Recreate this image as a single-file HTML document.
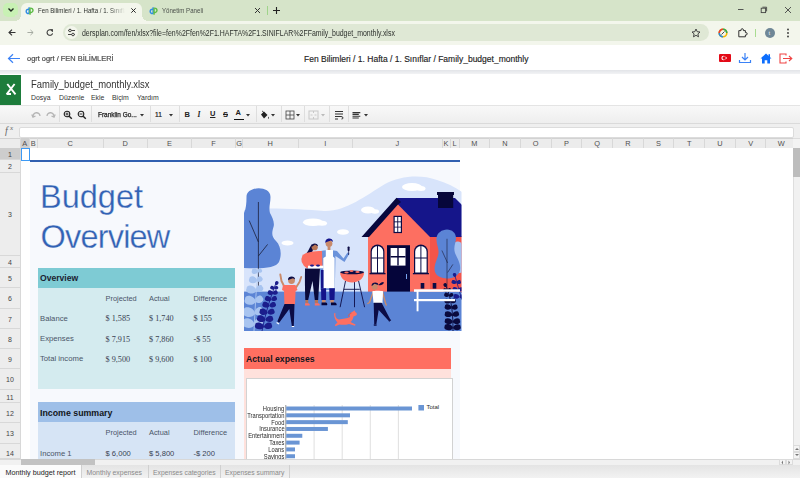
<!DOCTYPE html>
<html><head><meta charset="utf-8">
<style>
*{margin:0;padding:0;box-sizing:border-box}
html,body{width:800px;height:478px;overflow:hidden;background:#fff;font-family:"Liberation Sans",sans-serif}
.a{position:absolute}
.t{position:absolute;white-space:nowrap;line-height:1}
#tabbar{left:0;top:0;width:800px;height:21px;background:#d6e4c9}
#addr{left:0;top:21px;width:800px;height:24px;background:#f3f6ec}
#apphdr{left:0;top:45px;width:800px;height:26px;background:#fff}
#shadow{left:0;top:70px;width:800px;height:4px;background:linear-gradient(#e2e4e8,#f2f3f5)}
#xl{left:0;top:74px;width:800px;height:31px;background:#fff}
#toolbar{left:0;top:105px;width:800px;height:19px;background:linear-gradient(#f8f8f8,#eeeeee);border-top:1px solid #e4e4e4;border-bottom:1px solid #dadada}
#fbar{left:0;top:124px;width:800px;height:14px;background:#efefef}
#colhdr{left:0;top:138px;width:800px;height:10px;background:#ececec;border-top:1px solid #d2d2d2}
#grid{left:0;top:148px;width:800px;height:311px;background:#fff}
#hscroll{left:0;top:459px;width:800px;height:6px;background:#f1f1f1;border-top:1px solid #d8d8d8}
#sheets{left:0;top:465px;width:800px;height:13px;background:linear-gradient(#e4e4e4,#f2f2f2)}
.ch{position:absolute;top:0;height:10px;font-size:7.4px;line-height:12.2px;text-align:center;color:#505050;border-right:1px solid #d8d8d8}
.rh{position:absolute;left:0;width:21px;font-size:7px;text-align:center;color:#444;border-bottom:1px solid #d8d8d8;background:#ededed;border-right:1px solid #d8d8d8}
.sep{position:absolute;top:106px;width:1px;height:16px;background:#dedede}
</style></head><body>
<!-- ============ TAB BAR ============ -->
<div id="tabbar" class="a"></div>
<div class="a" style="left:3px;top:3px;width:15px;height:14px;background:#c8f1b4;border-radius:5px"></div>
<svg class="a" style="left:7px;top:7px" width="8" height="6" viewBox="0 0 8 6"><path d="M1.5 1.5 L4 4 L6.5 1.5" stroke="#1f2a1f" stroke-width="1.4" fill="none"/></svg>
<div class="a" style="left:21px;top:3px;width:121px;height:19px;background:#f3f6ec;border-radius:6px 6px 0 0"></div>
<div class="a" style="left:15px;top:15px;width:6px;height:6px;background:radial-gradient(circle at 0 0,#d6e4c9 6px,#f3f6ec 6px)"></div>
<div class="a" style="left:142px;top:15px;width:6px;height:6px;background:radial-gradient(circle at 6px 0,#d6e4c9 6px,#f3f6ec 6px)"></div>
<svg class="a" style="left:24.5px;top:5.5px" width="9" height="9.5" viewBox="0 0 10 10"><path d="M4.6 1 V8.2 M4.4 3.4 A2.4 2.4 0 1 0 4.4 8" stroke="#2f8de4" stroke-width="1.6" fill="none"/><path d="M5.6 9.5 V2 M5.8 2.2 A2.4 2.4 0 1 1 5.8 6.8" stroke="#5dbb46" stroke-width="1.6" fill="none"/></svg>
<div class="a" style="left:38px;top:6px;width:87px;height:10px;overflow:hidden;-webkit-mask-image:linear-gradient(90deg,#000 82%,transparent)"><div class="t" style="left:0;top:1px;font-size:7.2px;color:#2b2f2b;transform-origin:0 0;transform:scaleX(0.85)">Fen Bilimleri / 1. Hafta / 1. Sınıflar / Family_budget_monthly</div></div>
<svg class="a" style="left:130px;top:7px" width="7" height="7" viewBox="0 0 7 7"><path d="M1.3 1.3 L5.7 5.7 M5.7 1.3 L1.3 5.7" stroke="#222" stroke-width="0.95"/></svg>
<svg class="a" style="left:148.5px;top:5.5px" width="9" height="9.5" viewBox="0 0 10 10"><path d="M4.6 1 V8.2 M4.4 3.4 A2.4 2.4 0 1 0 4.4 8" stroke="#2f8de4" stroke-width="1.6" fill="none"/><path d="M5.6 9.5 V2 M5.8 2.2 A2.4 2.4 0 1 1 5.8 6.8" stroke="#5dbb46" stroke-width="1.6" fill="none"/></svg>
<div class="t" style="left:162px;top:7px;font-size:7.2px;color:#4a4f4a;transform-origin:0 0;transform:scaleX(0.85)">Yönetim Paneli</div>
<svg class="a" style="left:254px;top:7px" width="7" height="7" viewBox="0 0 7 7"><path d="M1 1 L6 6 M6 1 L1 6" stroke="#333" stroke-width="1"/></svg>
<div class="a" style="left:267px;top:6px;width:1px;height:9px;background:#9fd48a"></div>
<svg class="a" style="left:272px;top:6px" width="9" height="9" viewBox="0 0 9 9"><path d="M4.5 1 V8 M1 4.5 H8" stroke="#222" stroke-width="1.1"/></svg>
<svg class="a" style="left:737px;top:6px" width="9" height="9" viewBox="0 0 9 9"><path d="M1 3.5 H6.5" stroke="#444" stroke-width="0.9"/></svg>
<svg class="a" style="left:760px;top:6px" width="8" height="8" viewBox="0 0 8 8"><rect x="1.2" y="2.2" width="4.4" height="4.4" stroke="#444" stroke-width="0.9" fill="none"/><path d="M2.4 1.2 H6.6 V5.4" stroke="#444" stroke-width="0.9" fill="none"/></svg>
<svg class="a" style="left:784px;top:6px" width="8" height="8" viewBox="0 0 8 8"><path d="M1 1 L7 7 M7 1 L1 7" stroke="#444" stroke-width="0.9"/></svg>

<!-- ============ ADDRESS BAR ============ -->
<div id="addr" class="a"></div>
<svg class="a" style="left:7.5px;top:29px" width="8" height="7" viewBox="0 0 8 7"><path d="M7.5 3.5 H1.2 M4 0.6 L1 3.5 L4 6.4" stroke="#333" stroke-width="1.1" fill="none"/></svg>
<svg class="a" style="left:26.5px;top:29px" width="7" height="7" viewBox="0 0 8 7"><path d="M0.5 3.5 H6.8 M4 0.6 L7 3.5 L4 6.4" stroke="#9aa097" stroke-width="1" fill="none"/></svg>
<svg class="a" style="left:45.5px;top:29px" width="7.5" height="7.5" viewBox="0 0 8 8"><path d="M6.9 2.6 A3 3 0 1 0 7 4.6" stroke="#333" stroke-width="1.1" fill="none"/><path d="M5 0.8 H7.2 V3" stroke="#333" stroke-width="1.1" fill="none"/></svg>
<div class="a" style="left:63px;top:24px;width:646px;height:17px;background:#dfe8d5;border-radius:9px"></div>
<div class="a" style="left:65px;top:26px;width:13px;height:13px;background:#f3f6ec;border-radius:50%"></div>
<svg class="a" style="left:67px;top:28px" width="9" height="9" viewBox="0 0 9 9"><path d="M1 2.5 H8 M1 6.5 H8" stroke="#333" stroke-width="0.9"/><circle cx="3" cy="2.5" r="1.3" fill="#f3f6ec" stroke="#333" stroke-width="0.9"/><circle cx="6" cy="6.5" r="1.3" fill="#f3f6ec" stroke="#333" stroke-width="0.9"/></svg>
<div class="t" style="left:82px;top:28.5px;font-size:8.4px;color:#2d312d;transform-origin:0 0;transform:scaleX(0.83)">dersplan.com/fen/xlsx?file=fen%2Ffen%2F1.HAFTA%2F1.SINIFLAR%2FFamily_budget_monthly.xlsx</div>
<svg class="a" style="left:691px;top:28px" width="10" height="10" viewBox="0 0 10 10"><path d="M5 1 L6.2 3.7 L9 4 L6.9 5.9 L7.5 8.8 L5 7.3 L2.5 8.8 L3.1 5.9 L1 4 L3.8 3.7 Z" stroke="#333" stroke-width="0.9" fill="none" stroke-linejoin="round"/></svg>
<svg class="a" style="left:718px;top:28px" width="10" height="10" viewBox="0 0 10 10"><circle cx="5" cy="5" r="3.8" fill="none" stroke="#f2b600" stroke-width="1.6"/><path d="M5 1.2 A3.8 3.8 0 0 0 1.2 5" stroke="#e34133" stroke-width="1.6" fill="none"/><path d="M1.2 5 A3.8 3.8 0 0 0 5 8.8" stroke="#2a8bd9" stroke-width="1.6" fill="none"/><path d="M5 1.2 A3.8 3.8 0 0 1 8.8 5" stroke="#35a852" stroke-width="1.6" fill="none"/><path d="M3.5 6.5 L6.5 3.5" stroke="#333" stroke-width="0.9"/></svg>
<svg class="a" style="left:737px;top:27px" width="11" height="11" viewBox="0 0 11 11"><path d="M1.8 3.6 H4 V2.9 A1.2 1.2 0 0 1 6.4 2.9 V3.6 H8.4 V5.6 H9 A1.2 1.2 0 0 1 9 8 H8.4 V9.8 H1.8 Z" stroke="#333" stroke-width="1" fill="none" stroke-linejoin="round"/></svg>
<div class="a" style="left:755px;top:29px;width:1px;height:8px;background:#a8dc90"></div>
<div class="a" style="left:765px;top:28px;width:10px;height:10px;background:#6f8797;border-radius:50%"></div>
<div class="t" style="left:768.5px;top:30px;font-size:6px;color:#e8eef2">t</div>
<svg class="a" style="left:786px;top:28px" width="4" height="10" viewBox="0 0 4 10"><circle cx="2" cy="1.5" r="0.9" fill="#333"/><circle cx="2" cy="5" r="0.9" fill="#333"/><circle cx="2" cy="8.5" r="0.9" fill="#333"/></svg>

<!-- ============ APP HEADER ============ -->
<div id="apphdr" class="a"></div>
<div id="shadow" class="a"></div>
<svg class="a" style="left:7px;top:53px" width="14" height="11" viewBox="0 0 14 11"><path d="M13 5.5 H1.8 M6 1.2 L1.5 5.5 L6 9.8" stroke="#3b82f6" stroke-width="1.2" fill="none"/></svg>
<div class="t" style="left:27px;top:55px;font-size:7.9px;color:#4a4a4a;-webkit-text-stroke:0.2px #4a4a4a;transform-origin:0 0;transform:scaleX(0.94)">ogrt ogrt / FEN BİLİMLERİ</div>
<div class="t" style="left:304px;top:55px;font-size:8.5px;color:#222;font-weight:normal;-webkit-text-stroke:0.15px #222">Fen Bilimleri / 1. Hafta / 1. Sınıflar / Family_budget_monthly</div>
<div class="a" style="left:719px;top:54px;width:12px;height:8px;background:#e30a17;border-radius:1px"></div>
<svg class="a" style="left:719px;top:54px" width="12" height="8" viewBox="0 0 12 8"><circle cx="4.6" cy="4" r="2.2" fill="#fff"/><circle cx="5.2" cy="4" r="1.75" fill="#e30a17"/><circle cx="7.2" cy="4" r="0.8" fill="#fff"/></svg>
<svg class="a" style="left:738px;top:52px" width="14" height="12" viewBox="0 0 14 12"><path d="M7 1 V8 M4 5 L7 8 L10 5" stroke="#3b82f6" stroke-width="1.2" fill="none"/><path d="M1.5 8 V10.5 H12.5 V8" stroke="#3b82f6" stroke-width="1.2" fill="none"/></svg>
<svg class="a" style="left:760px;top:53px" width="12" height="11" viewBox="0 0 12 11"><path d="M6 0.5 L11.5 5.5 H10 V10.5 H7.3 V7.3 H4.7 V10.5 H2 V5.5 H0.5 Z" fill="#0d6efd"/><rect x="8.5" y="1.2" width="1.5" height="3" fill="#0d6efd"/></svg>
<svg class="a" style="left:779px;top:53px" width="14" height="11" viewBox="0 0 14 11"><path d="M7 2.5 V1 H1 V10 H7 V8.5" stroke="#ef4444" stroke-width="1.1" fill="none"/><path d="M4 5.5 H12.5 M10 3 L12.8 5.5 L10 8" stroke="#ef4444" stroke-width="1.1" fill="none"/></svg>

<!-- ============ EXCEL HEADER ============ -->
<div id="xl" class="a"></div>
<div class="a" style="left:0;top:75px;width:20.7px;height:30px;background:#1d7c3b"></div>
<svg class="a" style="left:5px;top:83px" width="12" height="12" viewBox="0 0 12 12"><path d="M2.3 1 L10.5 11.4 M9.6 1 L1.6 11.4 M1.6 11 H6" stroke="#fff" stroke-width="1.9" fill="none"/></svg>
<div class="t" style="left:31px;top:79px;font-size:10.5px;color:#333;transform-origin:0 0;transform:scaleX(0.9)">Family_budget_monthly.xlsx</div>
<div class="t" style="left:31px;top:94.8px;font-size:6.9px;color:#333">Dosya</div>
<div class="t" style="left:59px;top:94.8px;font-size:6.9px;color:#333">Düzenle</div>
<div class="t" style="left:91px;top:94.8px;font-size:6.9px;color:#333">Ekle</div>
<div class="t" style="left:112px;top:94.8px;font-size:6.9px;color:#333">Biçim</div>
<div class="t" style="left:137px;top:94.8px;font-size:6.9px;color:#333">Yardım</div>

<!-- ============ TOOLBAR ============ -->
<div id="toolbar" class="a"></div>
<svg class="a" style="left:31px;top:111px" width="11" height="8" viewBox="0 0 11 8"><path d="M2 5.5 A3.5 3.5 0 0 1 9 5" stroke="#b5b5b5" stroke-width="1.3" fill="none"/><path d="M0.8 3.5 L2 6.2 L4.5 5" stroke="#b5b5b5" stroke-width="1.3" fill="none"/></svg>
<svg class="a" style="left:45px;top:111px" width="11" height="8" viewBox="0 0 11 8"><path d="M9 5.5 A3.5 3.5 0 0 0 2 5" stroke="#b5b5b5" stroke-width="1.3" fill="none"/><path d="M10.2 3.5 L9 6.2 L6.5 5" stroke="#b5b5b5" stroke-width="1.3" fill="none"/></svg>
<div class="sep" style="left:59px"></div>
<svg class="a" style="left:63px;top:110px" width="10" height="10" viewBox="0 0 10 10"><circle cx="4" cy="4" r="2.8" stroke="#222" stroke-width="1.1" fill="none"/><path d="M6.2 6.2 L8.8 8.8" stroke="#222" stroke-width="1.4"/><path d="M2.5 4 H5.5 M4 2.5 V5.5" stroke="#222" stroke-width="0.9"/></svg>
<svg class="a" style="left:77px;top:110px" width="10" height="10" viewBox="0 0 10 10"><circle cx="4" cy="4" r="2.8" stroke="#222" stroke-width="1.1" fill="none"/><path d="M6.2 6.2 L8.8 8.8" stroke="#222" stroke-width="1.4"/><path d="M2.5 4 H5.5" stroke="#222" stroke-width="0.9"/></svg>
<div class="sep" style="left:91px"></div>
<div class="t" style="left:98px;top:112px;font-size:6.8px;color:#222;-webkit-text-stroke:0.25px #222;transform-origin:0 0;transform:scaleX(0.95)">Franklin Go...</div>
<svg class="a" style="left:140px;top:114px" width="4" height="3" viewBox="0 0 4 3"><path d="M0 0 H4 L2 2.5Z" fill="#333"/></svg>
<div class="sep" style="left:150px"></div>
<div class="t" style="left:155px;top:112px;font-size:6.6px;color:#222;font-weight:normal;-webkit-text-stroke:0.2px #222">11</div>
<svg class="a" style="left:169px;top:114px" width="4" height="3" viewBox="0 0 4 3"><path d="M0 0 H4 L2 2.5Z" fill="#333"/></svg>
<div class="sep" style="left:179px"></div>
<div class="t" style="left:184.5px;top:110.5px;font-size:7.5px;color:#222;font-weight:bold">B</div>
<div class="t" style="left:197.5px;top:110.5px;font-size:7.5px;color:#222;font-weight:bold;font-style:italic;font-family:'Liberation Serif',serif">I</div>
<div class="t" style="left:210px;top:110px;font-size:7.5px;color:#222;font-weight:bold;text-decoration:underline">U</div>
<div class="t" style="left:223px;top:110.5px;font-size:7.5px;color:#222;font-weight:bold;text-decoration:line-through">S</div>
<div class="t" style="left:235.5px;top:109px;font-size:7.5px;color:#222;font-weight:bold">A</div>
<div class="a" style="left:234px;top:118.5px;width:10px;height:1.6px;background:#111"></div>
<svg class="a" style="left:246px;top:114px" width="4" height="3" viewBox="0 0 4 3"><path d="M0 0 H4 L2 2.5Z" fill="#333"/></svg>
<div class="sep" style="left:256px"></div>
<svg class="a" style="left:259px;top:110px" width="11" height="10" viewBox="0 0 11 10"><path d="M2 4.5 L5 1.5 L8.5 5 L5 8.5 Z" fill="#222"/><path d="M3.2 1 L5 2.8" stroke="#222" stroke-width="1"/><path d="M9.5 6.5 Q10.5 8 9.5 9 Q8.5 8 9.5 6.5Z" fill="#222"/></svg>
<svg class="a" style="left:271px;top:114px" width="4" height="3" viewBox="0 0 4 3"><path d="M0 0 H4 L2 2.5Z" fill="#333"/></svg>
<div class="sep" style="left:281px"></div>
<svg class="a" style="left:285px;top:110px" width="10" height="10" viewBox="0 0 10 10"><rect x="1" y="1" width="8" height="8" stroke="#444" stroke-width="0.8" fill="none"/><path d="M5 1 V9 M1 5 H9" stroke="#444" stroke-width="0.8"/></svg>
<svg class="a" style="left:296px;top:114px" width="4" height="3" viewBox="0 0 4 3"><path d="M0 0 H4 L2 2.5Z" fill="#333"/></svg>
<div class="sep" style="left:304px"></div>
<svg class="a" style="left:308px;top:110px" width="11" height="10" viewBox="0 0 11 10"><rect x="1" y="1" width="9" height="8" stroke="#c8c8c8" stroke-width="1" fill="none"/><path d="M5.5 1 V3 M5.5 7 V9 M2.5 5 H4.5 M6.5 5 H8.5" stroke="#c8c8c8" stroke-width="1"/></svg>
<svg class="a" style="left:321px;top:114px" width="4" height="3" viewBox="0 0 4 3"><path d="M0 0 H4 L2 2.5Z" fill="#bbb"/></svg>
<div class="sep" style="left:329px"></div>
<svg class="a" style="left:334px;top:110px" width="10" height="10" viewBox="0 0 10 10"><path d="M1 1.5 H9 M1 4 H9 M1 6.5 H7 M1 9 H4" stroke="#333" stroke-width="1"/><path d="M7 6.5 Q9 6.5 9 8 Q9 9 7.5 9" stroke="#333" stroke-width="1" fill="none"/></svg>
<div class="sep" style="left:348px"></div>
<svg class="a" style="left:352px;top:110px" width="9" height="10" viewBox="0 0 9 10"><path d="M0.5 2.6 H8.3 M0.5 4.4 H6.8 M0.5 6.2 H8.3 M0.5 8 H6.8" stroke="#333" stroke-width="1.1"/></svg>
<svg class="a" style="left:364px;top:114px" width="4" height="3" viewBox="0 0 4 3"><path d="M0 0 H4 L2 2.5Z" fill="#333"/></svg>

<!-- ============ FORMULA BAR ============ -->
<div id="fbar" class="a"></div>
<div class="t" style="left:5px;top:126px;font-size:10px;color:#666;font-style:italic;font-family:'Liberation Serif',serif">f</div>
<div class="t" style="left:10px;top:125px;font-size:7px;color:#666;font-style:italic;font-family:'Liberation Serif',serif">x</div>
<div class="a" style="left:19px;top:126.5px;width:775px;height:11px;background:#fff;border:1px solid #dcdcdc;border-radius:2px"></div>
<!-- ============ COLUMN HEADER ============ -->
<div id="colhdr" class="a"></div>
<div class="ch" style="left:21px;width:8.5px;top:138px;background:#cfcfcf;">A</div>
<div class="ch" style="left:29.5px;width:8.5px;top:138px;">B</div>
<div class="ch" style="left:38px;width:65.5px;top:138px;">C</div>
<div class="ch" style="left:103.5px;width:44.5px;top:138px;">D</div>
<div class="ch" style="left:148px;width:44px;top:138px;">E</div>
<div class="ch" style="left:192px;width:44px;top:138px;">F</div>
<div class="ch" style="left:236px;width:7px;top:138px;">G</div>
<div class="ch" style="left:243px;width:55.5px;top:138px;">H</div>
<div class="ch" style="left:298.5px;width:54.5px;top:138px;">I</div>
<div class="ch" style="left:353px;width:89.5px;top:138px;">J</div>
<div class="ch" style="left:442.5px;width:8.0px;top:138px;">K</div>
<div class="ch" style="left:450.5px;width:9.0px;top:138px;">L</div>
<div class="ch" style="left:459.5px;width:30.69999999999999px;top:138px;">M</div>
<div class="ch" style="left:490.2px;width:30.69999999999999px;top:138px;">N</div>
<div class="ch" style="left:520.9px;width:30.700000000000045px;top:138px;">O</div>
<div class="ch" style="left:551.6px;width:30.700000000000045px;top:138px;">P</div>
<div class="ch" style="left:582.3000000000001px;width:30.700000000000045px;top:138px;">Q</div>
<div class="ch" style="left:613.0000000000001px;width:30.700000000000045px;top:138px;">R</div>
<div class="ch" style="left:643.7000000000002px;width:30.700000000000045px;top:138px;">S</div>
<div class="ch" style="left:674.4000000000002px;width:30.700000000000045px;top:138px;">T</div>
<div class="ch" style="left:705.1000000000003px;width:30.700000000000045px;top:138px;">U</div>
<div class="ch" style="left:735.8000000000003px;width:30.700000000000045px;top:138px;">V</div>
<div class="ch" style="left:766.5000000000003px;width:30.700000000000045px;top:138px;">W</div>
<div class="a" style="left:0;top:138px;width:21px;height:10px;border-right:1px solid #d8d8d8"></div>
<div class="a" style="left:793px;top:138px;width:7px;height:10px;background:#f3f3f3;border-top:1px solid #dcdcdc"></div>
<!-- ============ GRID ============ -->
<div id="grid" class="a"></div>
<div class="rh" style="top:148px;height:12px;line-height:14.1px;background:#cdcdcd;">1</div>
<div class="rh" style="top:160px;height:13px;line-height:14.1px;">2</div>
<div class="rh" style="top:173px;height:83px;line-height:84.6px;">3</div>
<div class="rh" style="top:256px;height:12px;line-height:13.6px;">4</div>
<div class="rh" style="top:268px;height:20.25px;line-height:21.85px;">5</div>
<div class="rh" style="top:288.25px;height:20.25px;line-height:21.85px;">6</div>
<div class="rh" style="top:308.5px;height:20.25px;line-height:21.85px;">7</div>
<div class="rh" style="top:328.75px;height:20.25px;line-height:21.85px;">8</div>
<div class="rh" style="top:349px;height:20.25px;line-height:21.85px;">9</div>
<div class="rh" style="top:369.25px;height:20.25px;line-height:21.85px;">10</div>
<div class="rh" style="top:389.5px;height:13.5px;line-height:15.1px;">11</div>
<div class="rh" style="top:403px;height:20.25px;line-height:21.85px;">12</div>
<div class="rh" style="top:423.25px;height:20.25px;line-height:21.85px;">13</div>
<div class="rh" style="top:443.5px;height:15.5px;line-height:19.5px;">14</div>
<!-- ============ SHEET CONTENT ============ -->
<div class="a" style="left:29.5px;top:162px;width:430px;height:297px;background:#f7f9fd"></div>
<div class="a" style="left:29.5px;top:160px;width:430px;height:2px;background:#305fb0"></div>
<div class="a" style="left:21px;top:148px;width:9px;height:12.5px;border:1.5px solid #3d9af5;background:#fff"></div>
<div class="t" style="left:40px;top:181px;font-size:32.5px;color:#3262b4;letter-spacing:0px;-webkit-text-stroke:0.3px #f7f9fd">Budget</div>
<div class="t" style="left:40.5px;top:220.5px;font-size:32.5px;color:#3262b4;letter-spacing:-0.8px;-webkit-text-stroke:0.3px #f7f9fd">Overview</div>
<!-- overview -->
<div class="a" style="left:38px;top:268px;width:197px;height:20px;background:#7ecbd4"></div>
<div class="a" style="left:38px;top:288px;width:197px;height:101px;background:#d4ebef"></div>
<div class="t" style="left:40px;top:274px;font-size:8.6px;font-weight:bold;color:#1b2230">Overview</div>
<div class="t" style="left:105.5px;top:295px;font-size:7.4px;color:#4a5568">Projected</div>
<div class="t" style="left:149px;top:295px;font-size:7.4px;color:#4a5568">Actual</div>
<div class="t" style="left:193.5px;top:295px;font-size:7.4px;color:#4a5568">Difference</div>
<div class="t" style="left:40px;top:314.5px;font-size:7.7px;color:#4a5568">Balance</div>
<div class="t" style="left:40px;top:335px;font-size:7.7px;color:#4a5568">Expenses</div>
<div class="t" style="left:40px;top:355px;font-size:7.7px;color:#4a5568">Total income</div>
<div class="t" style="left:105.5px;top:315px;font-size:8.2px;color:#3a4252;font-family:'Liberation Serif',serif">$ 1,585</div>
<div class="t" style="left:149px;top:315px;font-size:8.2px;color:#3a4252;font-family:'Liberation Serif',serif">$ 1,740</div>
<div class="t" style="left:193.5px;top:315px;font-size:8.2px;color:#3a4252;font-family:'Liberation Serif',serif">$ 155</div>
<div class="t" style="left:105.5px;top:335.5px;font-size:8.2px;color:#3a4252;font-family:'Liberation Serif',serif">$ 7,915</div>
<div class="t" style="left:149px;top:335.5px;font-size:8.2px;color:#3a4252;font-family:'Liberation Serif',serif">$ 7,860</div>
<div class="t" style="left:193.5px;top:335.5px;font-size:8.2px;color:#3a4252;font-family:'Liberation Serif',serif">-$ 55</div>
<div class="t" style="left:105.5px;top:355.5px;font-size:8.2px;color:#3a4252;font-family:'Liberation Serif',serif">$ 9,500</div>
<div class="t" style="left:149px;top:355.5px;font-size:8.2px;color:#3a4252;font-family:'Liberation Serif',serif">$ 9,600</div>
<div class="t" style="left:193.5px;top:355.5px;font-size:8.2px;color:#3a4252;font-family:'Liberation Serif',serif">$ 100</div>
<!-- income summary -->
<div class="a" style="left:38px;top:402px;width:197px;height:20px;background:#9ebfe8"></div>
<div class="a" style="left:38px;top:422px;width:197px;height:37px;background:#d6e4f5"></div>
<div class="t" style="left:40px;top:409px;font-size:8.8px;font-weight:bold;color:#121620">Income summary</div>
<div class="t" style="left:105.5px;top:428.5px;font-size:7.4px;color:#4a5568">Projected</div>
<div class="t" style="left:149px;top:428.5px;font-size:7.4px;color:#4a5568">Actual</div>
<div class="t" style="left:193.5px;top:428.5px;font-size:7.4px;color:#4a5568">Difference</div>
<div class="t" style="left:40px;top:449.5px;font-size:7.7px;color:#4a5568">Income 1</div>
<div class="t" style="left:105.5px;top:450px;font-size:7.6px;color:#3a4252">$ 6,000</div>
<div class="t" style="left:149px;top:450px;font-size:7.6px;color:#3a4252">$ 5,800</div>
<div class="t" style="left:193.5px;top:450px;font-size:7.6px;color:#3a4252">-$ 200</div>
<!-- actual expenses -->
<div class="a" style="left:243.5px;top:348px;width:207px;height:21px;background:#ff6f61"></div>
<div class="a" style="left:243.5px;top:369px;width:207px;height:90px;background:#ffe1dc"></div>
<div class="t" style="left:246px;top:355px;font-size:8.7px;font-weight:bold;color:#121620">Actual expenses</div>
<div class="a" style="left:246px;top:378px;width:206.5px;height:90px;background:#fff;border:1px solid #d2d2d2"></div>
<div class="a" style="left:246px;top:378px;width:206.5px;height:81px;overflow:hidden">
<svg class="a" style="left:0;top:0" width="207" height="81" viewBox="246 378 207 81">
<path d="M314.1 405 V459" stroke="#d8d8d8" stroke-width="0.8"/>
<path d="M342.2 405 V459" stroke="#d8d8d8" stroke-width="0.8"/>
<path d="M370.3 405 V459" stroke="#d8d8d8" stroke-width="0.8"/>
<path d="M398.4 405 V459" stroke="#d8d8d8" stroke-width="0.8"/>
<path d="M285.8 405 V459" stroke="#8a8a8a" stroke-width="0.9"/>
<rect x="286.2" y="406.50" width="125.8" height="4" fill="#6a95d4"/>
<rect x="286.2" y="413.32" width="63.8" height="4" fill="#6a95d4"/>
<rect x="286.2" y="420.14" width="61.6" height="4" fill="#6a95d4"/>
<rect x="286.2" y="426.96" width="41.7" height="4" fill="#6a95d4"/>
<rect x="286.2" y="433.78" width="16.1" height="4" fill="#6a95d4"/>
<rect x="286.2" y="440.60" width="13.4" height="4" fill="#6a95d4"/>
<rect x="286.2" y="447.42" width="8.8" height="4" fill="#6a95d4"/>
<rect x="286.2" y="454.24" width="8.8" height="4" fill="#6a95d4"/>
<rect x="418.4" y="405" width="5.6" height="5.5" fill="#6a95d4"/>
</svg>
<div class="t" style="right:168.0px;top:27.90px;font-size:6.3px;color:#2a2a2a;transform-origin:100% 0;transform:scaleX(0.92)">Housing</div>
<div class="t" style="right:168.0px;top:34.72px;font-size:6.3px;color:#2a2a2a;transform-origin:100% 0;transform:scaleX(0.92)">Transportation</div>
<div class="t" style="right:168.0px;top:41.54px;font-size:6.3px;color:#2a2a2a;transform-origin:100% 0;transform:scaleX(0.92)">Food</div>
<div class="t" style="right:168.0px;top:48.36px;font-size:6.3px;color:#2a2a2a;transform-origin:100% 0;transform:scaleX(0.92)">Insurance</div>
<div class="t" style="right:168.0px;top:55.18px;font-size:6.3px;color:#2a2a2a;transform-origin:100% 0;transform:scaleX(0.92)">Entertainment</div>
<div class="t" style="right:168.0px;top:62.00px;font-size:6.3px;color:#2a2a2a;transform-origin:100% 0;transform:scaleX(0.92)">Taxes</div>
<div class="t" style="right:168.0px;top:68.82px;font-size:6.3px;color:#2a2a2a;transform-origin:100% 0;transform:scaleX(0.92)">Loans</div>
<div class="t" style="right:168.0px;top:75.64px;font-size:6.3px;color:#2a2a2a;transform-origin:100% 0;transform:scaleX(0.92)">Savings</div>
<div class="t" style="left:180.5px;top:26.3px;font-size:6px;color:#2a2a2a">Total</div>
</div>
<svg class="a" style="left:240px;top:170px" width="225" height="165" viewBox="240 170 225 165">
<defs><clipPath id="ic"><rect x="244" y="170" width="217.5" height="161"/></clipPath></defs>
<g clip-path="url(#ic)">
<!-- sky -->
<path d="M244 210 C 262 207, 300 209, 324 211 C 345 212, 365 196, 385 184 C 400 176, 420 174, 437 180 C 447 183, 455 187, 462 192 V293 H244Z" fill="#d8e4fb"/>
<!-- clouds -->
<g fill="#fff">
<ellipse cx="412" cy="187" rx="10" ry="4"/><ellipse cx="421" cy="188.5" rx="4.5" ry="2.5"/>
<ellipse cx="368" cy="210" rx="7" ry="3.5"/><ellipse cx="375" cy="211.5" rx="4" ry="2.2"/>
<ellipse cx="313" cy="222.3" rx="10" ry="3.8"/><ellipse cx="322" cy="223.3" rx="5" ry="2.5"/>
<ellipse cx="343" cy="232" rx="6" ry="2.8"/>
<ellipse cx="287.5" cy="243" rx="6" ry="2.4"/>
</g>
<!-- left tree blob -->
<path d="M246.5 197 C 246 186, 270.5 185, 270.5 197 C 270.5 203, 268.5 208, 270 213 C 272 217, 275 222, 273.5 227 C 272 232, 271 236, 276 241 C 281 246, 282 255, 279 262 C 276 268, 262 269, 244 268 V213 C 246 209, 246.5 203, 246.5 197Z" fill="#5b84d5"/>
<path d="M258.4 202 V293 M249.2 220.6 L258.4 242 M258.4 256 L267.6 244.4" stroke="#1c1f3a" stroke-width="0.8" fill="none"/>
<!-- house side wall + roof -->
<rect x="430" y="236" width="32" height="57" fill="#f4554a"/>
<path d="M397 198 H455 L462 205 V237 H380 Z" fill="#15158a"/>
<rect x="438" y="192" width="15.2" height="16" fill="#06063a"/>
<path d="M437 192 H454 V195 H437Z" fill="#06063a"/>
<!-- gable front -->
<path d="M397 203.5 L430 237 V293 H368 V237Z" fill="#fd6f61"/>
<path d="M396.5 197.8 L361.5 237 H369 L397.5 205 L401 202 Z" fill="#07073d"/>
<!-- gable window -->
<rect x="393.5" y="215.8" width="8.5" height="17.3" fill="#0b0b45"/>
<rect x="394.7" y="217" width="2.6" height="4.4" fill="#fff"/><rect x="398.2" y="217" width="2.6" height="4.4" fill="#fff"/>
<rect x="394.7" y="222.3" width="2.6" height="4.4" fill="#fff"/><rect x="398.2" y="222.3" width="2.6" height="4.4" fill="#fff"/>
<rect x="394.7" y="227.5" width="2.6" height="4.4" fill="#fff"/><rect x="398.2" y="227.5" width="2.6" height="4.4" fill="#fff"/>
<!-- arched windows -->
<g id="aw">
<path d="M370.6 273.6 V251.5 A6.9 6.9 0 0 1 384.4 251.5 V273.6Z" fill="#0b0b45"/>
<path d="M371.8 272.4 V251.8 A5.7 5.7 0 0 1 383.2 251.8 V272.4Z" fill="#fff"/>
<path d="M377.5 245 V273 M371.5 258 H383.5" stroke="#0b0b45" stroke-width="1"/>
<rect x="369.5" y="273" width="16" height="1.3" fill="#0b0b45"/>
</g>
<use href="#aw" x="43.4"/>
<!-- door -->
<rect x="387" y="245.2" width="23" height="48" fill="#05053a"/>
<rect x="390.6" y="248" width="14.9" height="17.6" fill="#fff"/>
<path d="M398 248 V265.6 M390.6 256.8 H405.5" stroke="#05053a" stroke-width="1.4"/>
<path d="M406.5 274 V279" stroke="#7aa6ef" stroke-width="1"/>
<!-- right trees -->
<path d="M453 250 C 452 244, 455 241.5, 458 241.5 C 462 241.5, 463 246, 463 252 V 272 C 460 274, 455 273, 454 268 C 453 262, 454 256, 453 250Z" fill="#a3bff0"/>
<path d="M447 229.5 C 452 229.5, 456 233, 456 238 C 456 243, 453 247, 455 253 C 457 258, 461 263, 460 270 C 459 276, 453 278.5, 447 278.5 C 440 278.5, 434.5 275, 434.5 269 C 434.5 263, 438 258, 438.5 253 C 439 248, 436 244, 436.5 238 C 437 233, 442 229.5, 447 229.5Z" fill="#5b84d5"/>
<path d="M447 238.8 V293 M441.9 250.5 L447.6 263 M452.9 264.4 L447.6 272.5" stroke="#1c1f3a" stroke-width="0.6" fill="none"/>
<!-- ground -->
<rect x="244" y="291.6" width="218" height="39.4" fill="#5b84d5"/>
<!-- left light plant -->
<path d="M254 331 C 255 310, 256 290, 258 270" stroke="#b9d0f4" stroke-width="0.8" fill="none"/>
<path d="M257.8 272.0 C 258.0 267.9, 252.1 266.7, 252.0 270.4 C 250.2 273.7, 255.9 275.6, 257.8 272.0Z" fill="#a8c4f0"/>
<path d="M257.8 272.0 C 260.2 274.2, 263.7 271.4, 261.5 269.4 C 260.4 266.7, 256.5 269.0, 257.8 272.0Z" fill="#a8c4f0"/>
<path d="M257.0 281.0 C 257.1 276.0, 249.3 274.4, 249.3 278.9 C 247.0 282.9, 254.6 285.4, 257.0 281.0Z" fill="#a8c4f0"/>
<path d="M257.0 281.0 C 260.0 283.7, 264.7 279.9, 261.9 277.6 C 260.6 274.2, 255.5 277.3, 257.0 281.0Z" fill="#a8c4f0"/>
<path d="M256.3 291.0 C 256.3 285.3, 246.5 283.2, 246.6 288.4 C 243.9 292.9, 253.4 295.9, 256.3 291.0Z" fill="#a8c4f0"/>
<path d="M256.3 291.0 C 259.7 294.0, 265.7 289.3, 262.4 286.7 C 261.1 282.8, 254.7 286.8, 256.3 291.0Z" fill="#a8c4f0"/>
<path d="M255.6 302.0 C 255.6 295.6, 244.8 293.3, 245.0 299.2 C 241.9 304.1, 252.4 307.5, 255.6 302.0Z" fill="#a8c4f0"/>
<path d="M255.6 302.0 C 259.4 305.3, 265.9 300.2, 262.4 297.3 C 260.8 292.9, 253.8 297.3, 255.6 302.0Z" fill="#a8c4f0"/>
<path d="M255.0 314.0 C 255.0 307.2, 243.2 304.6, 243.4 310.9 C 240.1 316.2, 251.6 319.9, 255.0 314.0Z" fill="#a8c4f0"/>
<path d="M255.0 314.0 C 259.1 317.6, 266.2 312.0, 262.4 308.8 C 260.7 304.1, 253.1 308.9, 255.0 314.0Z" fill="#a8c4f0"/>
<path d="M254.5 325.0 C 254.5 318.2, 242.7 315.6, 242.9 321.9 C 239.6 327.2, 251.1 330.9, 254.5 325.0Z" fill="#a8c4f0"/>
<path d="M254.5 325.0 C 258.6 328.6, 265.7 323.0, 261.9 319.8 C 260.2 315.1, 252.6 319.9, 254.5 325.0Z" fill="#a8c4f0"/>
<!-- left dark plant -->
<path d="M262 331 C 265 315, 270 298, 276 283" stroke="#1b1d8c" stroke-width="0.9" fill="none"/>
<path d="M276.0 285.0 C 278.5 285.3, 279.6 281.4, 277.4 281.2 C 275.5 279.9, 273.9 283.6, 276.0 285.0Z" fill="#1b1d8c"/>
<path d="M274.5 289.0 C 275.2 286.4, 271.2 284.3, 270.6 286.8 C 268.8 288.5, 272.6 290.9, 274.5 289.0Z" fill="#1b1d8c"/>
<path d="M274.5 289.0 C 276.4 290.7, 279.6 288.2, 277.8 286.7 C 277.0 284.5, 273.6 286.6, 274.5 289.0Z" fill="#1b1d8c"/>
<path d="M273.0 294.0 C 273.6 290.9, 268.5 288.8, 268.0 291.7 C 266.1 293.9, 271.0 296.4, 273.0 294.0Z" fill="#1b1d8c"/>
<path d="M273.0 294.0 C 275.1 296.2, 279.3 293.5, 277.3 291.5 C 276.6 288.9, 272.2 291.1, 273.0 294.0Z" fill="#1b1d8c"/>
<path d="M271.3 300.0 C 271.6 296.4, 265.4 294.4, 265.2 297.8 C 263.2 300.5, 269.2 303.0, 271.3 300.0Z" fill="#1b1d8c"/>
<path d="M271.3 300.0 C 273.5 302.7, 278.7 299.9, 276.6 297.5 C 276.1 294.4, 270.7 296.6, 271.3 300.0Z" fill="#1b1d8c"/>
<path d="M269.5 306.0 C 269.7 301.9, 262.7 300.0, 262.7 303.8 C 260.5 306.9, 267.2 309.4, 269.5 306.0Z" fill="#1b1d8c"/>
<path d="M269.5 306.0 C 271.7 309.2, 277.7 306.7, 275.6 303.8 C 275.3 300.2, 269.1 302.1, 269.5 306.0Z" fill="#1b1d8c"/>
<path d="M267.5 313.0 C 267.5 308.5, 259.6 306.9, 259.8 310.9 C 257.6 314.4, 265.2 316.8, 267.5 313.0Z" fill="#1b1d8c"/>
<path d="M267.5 313.0 C 269.8 316.5, 276.5 314.0, 274.3 310.8 C 274.2 306.9, 267.3 308.8, 267.5 313.0Z" fill="#1b1d8c"/>
<path d="M265.5 320.0 C 265.4 315.3, 257.1 313.5, 257.3 317.8 C 255.0 321.4, 263.1 324.0, 265.5 320.0Z" fill="#1b1d8c"/>
<path d="M265.5 320.0 C 267.7 323.8, 275.0 321.5, 272.9 318.0 C 273.0 314.0, 265.5 315.6, 265.5 320.0Z" fill="#1b1d8c"/>
<path d="M264.0 327.0 C 263.7 322.1, 254.8 320.6, 255.2 325.1 C 253.0 329.1, 261.7 331.3, 264.0 327.0Z" fill="#1b1d8c"/>
<path d="M264.0 327.0 C 266.3 331.0, 274.1 328.5, 271.8 324.9 C 271.9 320.6, 264.0 322.3, 264.0 327.0Z" fill="#1b1d8c"/>
<!-- right dark plant -->
<path d="M453 331 C 453 315, 452 300, 446 286" stroke="#0a0a3e" stroke-width="0.9" fill="none"/>
<path d="M446.0 287.0 C 448.1 285.6, 446.5 281.9, 444.6 283.2 C 442.4 283.4, 443.5 287.3, 446.0 287.0Z" fill="#0a0a3e"/>
<path d="M447.5 291.0 C 447.8 288.3, 443.5 287.0, 443.3 289.5 C 441.8 291.5, 446.0 293.2, 447.5 291.0Z" fill="#0a0a3e"/>
<path d="M447.5 291.0 C 449.3 292.9, 452.7 290.6, 451.0 289.0 C 450.4 286.7, 446.8 288.5, 447.5 291.0Z" fill="#0a0a3e"/>
<path d="M449.0 296.0 C 449.5 293.1, 444.9 291.2, 444.5 293.9 C 442.7 295.9, 447.1 298.3, 449.0 296.0Z" fill="#0a0a3e"/>
<path d="M449.0 296.0 C 450.8 298.2, 454.7 296.1, 453.1 294.1 C 452.6 291.6, 448.5 293.3, 449.0 296.0Z" fill="#0a0a3e"/>
<path d="M450.5 302.0 C 450.5 298.6, 444.6 297.3, 444.7 300.4 C 443.1 303.1, 448.8 305.0, 450.5 302.0Z" fill="#0a0a3e"/>
<path d="M450.5 302.0 C 452.3 304.7, 457.3 302.6, 455.6 300.2 C 455.4 297.2, 450.2 298.8, 450.5 302.0Z" fill="#0a0a3e"/>
<path d="M451.5 308.0 C 451.5 304.1, 444.8 302.7, 444.9 306.2 C 443.1 309.3, 449.5 311.3, 451.5 308.0Z" fill="#0a0a3e"/>
<path d="M451.5 308.0 C 453.3 311.2, 459.1 309.3, 457.4 306.4 C 457.5 303.1, 451.5 304.3, 451.5 308.0Z" fill="#0a0a3e"/>
<path d="M452.3 315.0 C 451.9 310.9, 444.4 310.0, 444.9 313.7 C 443.2 317.0, 450.5 318.7, 452.3 315.0Z" fill="#0a0a3e"/>
<path d="M452.3 315.0 C 454.3 318.4, 460.7 316.3, 458.8 313.3 C 458.9 309.7, 452.3 311.1, 452.3 315.0Z" fill="#0a0a3e"/>
<path d="M452.8 322.0 C 452.3 317.7, 444.4 316.7, 444.9 320.6 C 443.1 324.1, 450.9 325.9, 452.8 322.0Z" fill="#0a0a3e"/>
<path d="M452.8 322.0 C 454.6 325.7, 461.6 324.1, 459.9 320.7 C 460.3 317.0, 453.2 317.9, 452.8 322.0Z" fill="#0a0a3e"/>
<path d="M453.0 328.0 C 452.5 323.4, 444.1 322.4, 444.6 326.5 C 442.7 330.2, 451.0 332.1, 453.0 328.0Z" fill="#0a0a3e"/>
<path d="M453.0 328.0 C 454.9 331.9, 462.3 330.2, 460.5 326.7 C 461.0 322.7, 453.4 323.7, 453.0 328.0Z" fill="#0a0a3e"/>
<path d="M462 300 C 460 292, 457 284, 455 276" stroke="#1b1d8c" stroke-width="0.8" fill="none"/>
<path d="M455.0 277.0 C 457.3 276.0, 456.4 272.1, 454.3 273.1 C 452.0 272.9, 452.5 276.8, 455.0 277.0Z" fill="#1b1d8c"/>
<path d="M456.5 283.0 C 456.8 280.1, 452.0 278.6, 451.8 281.3 C 450.2 283.5, 454.8 285.4, 456.5 283.0Z" fill="#1b1d8c"/>
<path d="M456.5 283.0 C 458.1 285.3, 462.2 283.6, 460.7 281.5 C 460.5 278.9, 456.2 280.2, 456.5 283.0Z" fill="#1b1d8c"/>
<path d="M458.0 290.0 C 458.0 286.8, 452.6 285.7, 452.7 288.6 C 451.2 291.1, 456.4 292.8, 458.0 290.0Z" fill="#1b1d8c"/>
<path d="M458.0 290.0 C 459.5 292.6, 464.2 291.1, 462.8 288.7 C 462.8 286.0, 458.0 287.0, 458.0 290.0Z" fill="#1b1d8c"/>
<path d="M459.5 297.0 C 459.2 293.6, 453.2 292.8, 453.6 296.0 C 452.2 298.8, 458.0 300.1, 459.5 297.0Z" fill="#1b1d8c"/>
<path d="M459.5 297.0 C 460.8 299.9, 466.1 298.7, 464.8 296.1 C 465.1 293.1, 459.8 293.8, 459.5 297.0Z" fill="#1b1d8c"/>
<!-- table -->
<rect x="414" y="289.3" width="46" height="2.5" fill="#fff"/>
<rect x="414" y="299" width="41" height="2.2" fill="#fff"/>
<rect x="416.6" y="291" width="1.9" height="20.3" fill="#fff"/>
<rect x="420.7" y="283" width="3.6" height="5.6" fill="#0c0c45"/>
<rect x="432.7" y="283" width="3.6" height="5.6" fill="#0c0c45"/>
<!-- grill -->
<path d="M345.5 281 L340.1 307.2 M354.5 280 V307.2 M358.6 281 L364.6 307.2 M343.7 289.3 H359.8" stroke="#0c0c45" stroke-width="0.9"/>
<path d="M340.1 272.5 H364.1 C 364 279, 358 282.5, 352.1 282.5 C 346 282.5, 340.2 279, 340.1 272.5Z" fill="#fd6f61"/>
<ellipse cx="352.1" cy="272.3" rx="12" ry="1.9" fill="#0c0c45"/>
<ellipse cx="346.5" cy="272.5" rx="2.2" ry="0.9" fill="#fd6f61"/><ellipse cx="351.5" cy="271" rx="2" ry="0.9" fill="#fd6f61"/><ellipse cx="357.5" cy="272" rx="2.2" ry="0.9" fill="#fd6f61"/>
<!-- dad -->
<path d="M319.5 251.5 C 322 250, 334 250, 337 251 L 343.5 258.5 L 347.5 252.5 L 349.5 253.5 L 344.5 262 L 335.5 256 L 334.8 290 H 320.5 Z" fill="#6b93db"/>
<rect x="347.6" y="246.5" width="2" height="4.5" rx="0.8" fill="#0c0c45"/>
<path d="M348.6 251 V 255" stroke="#0c0c45" stroke-width="0.7"/>
<path d="M325.8 250 H333 V256.5 L334.6 258 V288.3 H323.3 V258 L325.8 256.5Z" fill="#fff"/>
<path d="M321 270 H323.5 V288.2 H321Z" fill="#14148a"/><path d="M321 288.2 H326.1 V300.1 H321.3Z M329.2 288.2 H334.9 L334.5 300.1 H329.6Z" fill="#14148a"/><path d="M322 300 H325.5 V302.8 H322Z M330.3 300 H333.8 V302.8 H330.3Z" fill="#c98a6a"/>
<path d="M321.5 302.6 H326 C 327.5 303, 327.5 305.2, 327 305.2 H321.5Z M331 302.6 H335 C 336.7 303, 337 305.2, 336.5 305.2 H331Z" fill="#05053a"/>
<circle cx="329" cy="243.6" r="3.4" fill="#c98a6a"/>
<path d="M325.4 243 C 324.5 237.5, 333 237, 333 242 L 331 240.5 L 326.5 242Z" fill="#14148a"/>
<rect x="327.6" y="246.5" width="2.8" height="3.5" fill="#c98a6a"/>
<!-- mom -->
<path d="M312 244 C 309.5 247, 309 251, 304.5 255.7 L 308 256.5 C 312 254, 313.5 250, 313.5 247Z" fill="#0c0c45"/>
<circle cx="314.7" cy="247.2" r="3.1" fill="#b87556"/>
<path d="M311.6 247 C 311 242.5, 318 242.5, 318 246.2 L 315 244.6Z" fill="#0c0c45"/>
<path d="M303 255 C 306 252, 314 251, 322 251 L 322.5 267.5 H 306 C 304 265, 302 259, 303 255Z" fill="#fd6f61"/>
<path d="M304 255 C 301.5 260, 302.5 264, 308 267" stroke="#fd6f61" stroke-width="2.6" fill="none"/>
<path d="M305 268.5 H320 L318.2 300.1 H314.8 L312.5 281 L308.2 300.1 H305.3 C 305 290, 304.8 280, 305 268.5Z" fill="#0a0a3a"/>
<path d="M305.4 300 H308.2 V303 H305.4Z M314.8 300 H318 V303 H314.8Z" fill="#b87556"/><path d="M305 303.3 H308.5 C 310 303.8, 310 305.5, 309.5 305.5 H305Z M314.8 303.3 H318.3 C 320 303.8, 320 305.5, 319.5 305.5 H314.8Z" fill="#fd6f61"/>
<rect x="308" y="265.7" width="15.5" height="2.6" fill="#fff"/>
<ellipse cx="312" cy="265.6" rx="2" ry="1.1" fill="#1b1d8c"/><ellipse cx="318" cy="265.6" rx="2" ry="1.1" fill="#1b1d8c"/>
<!-- boy -->
<path d="M284.5 287 L281.5 281 L280.3 274.5 M296 287.5 L299.5 282 L301.2 277" stroke="#c98a6a" stroke-width="1.9" stroke-linecap="round" stroke-linejoin="round" fill="none"/>
<circle cx="291.5" cy="280.6" r="3.4" fill="#c98a6a"/>
<path d="M288 280 C 287.5 275.5, 295.5 275.5, 295 279.5 L 293 278.3 L 289.5 279.5Z" fill="#0c0c45"/>
<path d="M283 285 H295.5 L297.5 290 L295.6 291 L295 304.4 H284.4 L284 291 L282 290Z" fill="#fd6f61"/>
<path d="M284.5 304 H294.5 L293.8 326 H291.8 L289.3 309 L279.2 322.8 L277.3 321.5Z" fill="#0c0c45"/>
<path d="M276.6 322.5 L279 324 M291.8 326.5 H294.2" stroke="#fff" stroke-width="1.2"/>
<!-- girl -->
<path d="M373.2 292 L369.5 302.5 L367.8 303.5 M382.5 292 L385.5 303 L386.3 305" stroke="#c98a6a" stroke-width="1.4" stroke-linecap="round" stroke-linejoin="round" fill="none"/>
<circle cx="374.7" cy="286.5" r="3.1" fill="#c98a6a"/>
<path d="M371.6 286 C 371 281.8, 378.5 281.5, 378.3 285 C 380 283.5, 381 282, 383.5 282 C 384.5 283.5, 382 285.3, 379 285.3 L 374.5 283.8 L 372.5 285.5Z" fill="#0c0c45"/>
<path d="M372.4 291.2 C 374 290.5, 381 290.5, 383.1 291.2 L 382.5 303 H373.5Z" fill="#fff"/>
<path d="M373.7 302.8 H381.6 L390.3 319.5 L388.6 320.8 L378.7 310 L376.4 324 H374.2Z" fill="#0c0c45"/>
<path d="M373.8 325 H376.6 M388.8 321.3 L390.8 319.8" stroke="#0c0c45" stroke-width="1.3"/>
<!-- dog -->
<path d="M335.4 313 C 335 317, 336.5 319, 339 319.5 C 343 318.5, 347 318.5, 350 317 C 349.5 314.5, 350.5 312, 353 311.5 L 354.5 310.2 L 355.3 312 C 357 313, 357.5 314.5, 356 315.5 L 353.5 316.5 C 353 319, 352 321, 350.5 322 L 355.6 324.5 L 355 325.7 L 349 324 C 346 325, 342 325, 339.5 324.5 L 335.5 326.2 L 334.8 325 L 337.5 322.5 C 336 321, 334 318, 334 313.5Z" fill="#fd6f61"/>
<path d="M351.5 313 C 349.5 313.5, 348 315, 348.5 316.5" stroke="#e85448" stroke-width="1" fill="none"/>
</g>
</svg>

<!-- ============ SCROLLBARS & SHEETS ============ -->
<div class="a" style="left:793px;top:148px;width:7px;height:311px;background:#f1f1f1;border-left:1px solid #dedede"></div>
<div class="a" style="left:793px;top:148px;width:7px;height:28.5px;background:#bdbdbd"></div>
<div class="a" style="left:793px;top:445px;width:7px;height:7px;background:#f4f4f4;border:1px solid #dcdcdc"></div>
<div class="a" style="left:793px;top:452px;width:7px;height:7px;background:#f4f4f4;border:1px solid #dcdcdc"></div>
<svg class="a" style="left:794px;top:447px" width="6" height="10" viewBox="0 0 6 10"><path d="M1 3 L3 1 L5 3Z M1 7 L5 7 L3 9Z" fill="#777"/></svg>
<div id="hscroll" class="a"></div>
<div class="a" style="left:21px;top:459px;width:74px;height:6px;background:#c2c2c2"></div>
<div class="a" style="left:778.5px;top:459px;width:7px;height:6px;background:#f4f4f4;border:1px solid #dcdcdc"></div>
<div class="a" style="left:785.5px;top:459px;width:7px;height:6px;background:#f4f4f4;border:1px solid #dcdcdc"></div>
<svg class="a" style="left:780px;top:460px" width="12" height="5" viewBox="0 0 12 5"><path d="M3 0.5 L1.5 2.5 L3 4.5Z M8.5 0.5 L10 2.5 L8.5 4.5Z" fill="#777"/></svg>
<div id="sheets" class="a"></div>
<div class="a" style="left:0;top:465px;width:81px;height:13px;background:#fbfbfb"></div>
<div class="t" style="left:5.5px;top:469px;font-size:7.2px;color:#222">Monthly budget report</div>
<div class="a" style="left:81px;top:465px;width:1px;height:13px;background:#d0d0d0"></div>
<div class="t" style="left:86.5px;top:469.8px;font-size:6.9px;color:#8a8a8a">Monthly expenses</div>
<div class="a" style="left:147.5px;top:465px;width:1px;height:13px;background:#d0d0d0"></div>
<div class="t" style="left:153px;top:469.8px;font-size:6.75px;color:#8a8a8a">Expenses categories</div>
<div class="a" style="left:219.5px;top:465px;width:1px;height:13px;background:#d0d0d0"></div>
<div class="t" style="left:225px;top:469.8px;font-size:6.75px;color:#8a8a8a">Expenses summary</div>
<div class="a" style="left:288.5px;top:465px;width:1px;height:13px;background:#d0d0d0"></div>
</body></html>
